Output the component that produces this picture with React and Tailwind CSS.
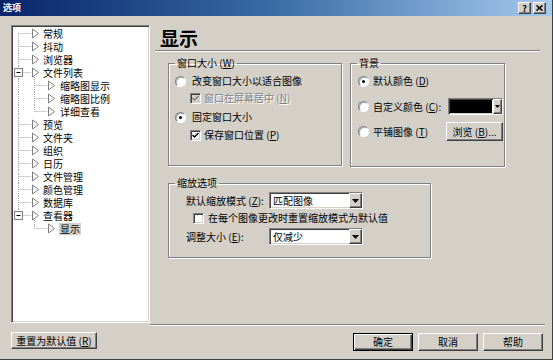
import React from 'react';

const sunken =
  'border border-t-[#808080] border-l-[#808080] border-r-white border-b-white shadow-[inset_1px_1px_0_#404040,inset_-1px_-1px_0_#d4d0c8]';
const raised =
  'border border-t-white border-l-white border-r-[#404040] border-b-[#404040] shadow-[inset_-1px_-1px_0_#808080]';

const tree = [
  { label: '常规', level: 1, first: true },
  { label: '抖动', level: 1 },
  { label: '浏览器', level: 1 },
  { label: '文件列表', level: 1, expander: true },
  { label: '缩略图显示', level: 2 },
  { label: '缩略图比例', level: 2 },
  { label: '详细查看', level: 2, lastChild: true },
  { label: '预览', level: 1 },
  { label: '文件夹', level: 1 },
  { label: '组织', level: 1 },
  { label: '日历', level: 1 },
  { label: '文件管理', level: 1 },
  { label: '颜色管理', level: 1 },
  { label: '数据库', level: 1 },
  { label: '查看器', level: 1, expander: true, last: true },
  { label: '显示', level: 2, lastChild: true, noTrunk: true, selected: true },
];

const dot = { stroke: '#a0a0a0', strokeDasharray: '1 1' };

function TreeRow({ item }) {
  const { label, level, first, last, expander, lastChild, noTrunk, selected } = item;
  const w = level === 1 ? 28 : 45;
  return (
    <div className="flex h-[13px] items-center overflow-hidden">
      <svg width={w} height="13" className="shrink-0">
        {level === 1 && <line x1="5.5" x2="5.5" y1={first ? 6.5 : 0} y2={last ? 6.5 : 13} {...dot} />}
        {level === 2 && !noTrunk && <line x1="5.5" x2="5.5" y1="0" y2="13" {...dot} />}
        {level === 1 && <line x1="5.5" x2="18" y1="6.5" y2="6.5" {...dot} />}
        {level === 2 && (
          <>
            <line x1="21.5" x2="21.5" y1="0" y2={lastChild ? 6.5 : 13} {...dot} />
            <line x1="21.5" x2="34" y1="6.5" y2="6.5" {...dot} />
          </>
        )}
        {expander && (
          <>
            <line x1="21.5" x2="21.5" y1="11" y2="13" {...dot} />
            <rect x="1.5" y="2.5" width="8" height="8" fill="#fff" stroke="#808080" />
            <line x1="3.5" x2="7.5" y1="6.5" y2="6.5" stroke="#000" />
          </>
        )}
        <polygon
          points={level === 1 ? '19.5,2 25.5,6.5 19.5,11' : '35.5,2 41.5,6.5 35.5,11'}
          fill="#fff"
          stroke="#808080"
        />
      </svg>
      <span
        className={
          selected
            ? 'ml-[1px] block h-[12px] bg-[#d4d0c8] px-[1px] leading-[12px]'
            : 'ml-[2px] block h-[12px] leading-[12px]'
        }
      >
        {label}
      </span>
    </div>
  );
}

function Radio({ checked }) {
  return (
    <span className="flex h-[11px] w-[11px] shrink-0 items-center justify-center rounded-full border border-t-[#808080] border-l-[#808080] border-r-white border-b-white bg-white shadow-[inset_1px_1px_0_#b0b0b0]">
      {checked && <span className="h-[3px] w-[3px] rounded-full bg-black" />}
    </span>
  );
}

function Check({ checked, disabled }) {
  return (
    <span
      className={`flex h-[11px] w-[11px] shrink-0 items-center justify-center ${sunken} ${
        disabled ? 'bg-[#d4d0c8]' : 'bg-white'
      }`}
    >
      {checked && (
        <svg width="7" height="7" viewBox="0 0 7 7">
          <path d="M0.5 3 L2.5 5 L6.5 1" fill="none" stroke={disabled ? '#808080' : '#000'} strokeWidth="1.5" />
        </svg>
      )}
    </span>
  );
}

function Arrow() {
  return (
    <svg width="7" height="4" viewBox="0 0 7 4">
      <polygon points="0,0 7,0 3.5,4" fill="#000" />
    </svg>
  );
}

function Combo({ value }) {
  return (
    <div className={`flex h-[17px] w-[94px] bg-white ${sunken}`}>
      <span className="flex flex-1 items-center pl-[3px]">{value}</span>
      <span className={`flex w-[13px] items-center justify-center bg-[#d4d0c8] ${raised}`}>
        <Arrow />
      </span>
    </div>
  );
}

function Acc({ children }) {
  return (
    <>
      {' '}(<u>{children}</u>)
    </>
  );
}

export default function App() {
  return (
    <div className="flex h-[360px] w-[553px] flex-col overflow-hidden border-r border-b border-r-[#404040] border-b-[#404040] bg-[#d4d0c8] font-['Noto_Sans_CJK_SC',sans-serif] text-[10px] leading-[12px] text-black">
      {/* title bar */}
      <div className="flex h-[16px] shrink-0 items-center bg-linear-to-r from-[#0a246a] via-[#3a6ea5] to-[#a6caf0] pl-[3px] pr-[6px]">
        <span className="text-[9px] font-bold text-white">选项</span>
        <div className="ml-auto flex gap-[2px]">
          <span className={`flex h-[12px] w-[13px] items-center justify-center bg-[#d4d0c8] text-[9px] font-bold leading-none ${raised}`}>
            ?
          </span>
          <span className={`flex h-[12px] w-[13px] items-center justify-center bg-[#d4d0c8] ${raised}`}>
            <svg width="7" height="6" viewBox="0 0 7 6">
              <path d="M0.5 0.5 L6.5 5.5 M6.5 0.5 L0.5 5.5" stroke="#000" strokeWidth="1.6" />
            </svg>
          </span>
        </div>
      </div>

      {/* body */}
      <div className="flex flex-1 flex-col pl-[11px] pr-[7px] pt-[9px]">
        <div className="flex h-[300px]">
          <div className={`h-[298px] w-[139px] shrink-0 bg-white pl-[1px] pt-[1px] ${sunken}`}>
            {tree.map((item) => (
              <TreeRow key={item.label} item={item} />
            ))}
          </div>

          <div className="flex flex-1 flex-col border-b border-b-[#808080] shadow-[0_1px_0_#fff]">
            <div className="mx-[5px] flex h-[26px] items-center border-b border-b-[#808080] pl-[5px] text-[19px] font-bold leading-none shadow-[0_1px_0_#fff]">
              显示
            </div>

            <div className="ml-[18px] mt-[6px] flex items-start gap-[8px]">
              <fieldset className="h-[109px] w-[174px] border border-[#808080] shadow-[inset_1px_1px_0_#fff,1px_1px_0_#fff]">
                <legend className="ml-[6px] px-[2px] leading-[12px]">
                  窗口大小<Acc>W</Acc>
                </legend>
                <div className="flex flex-col">
                  <div className="ml-[6px] mt-[5px] flex h-[14px] items-center gap-[6px]">
                    <Radio />
                    <span>改变窗口大小以适合图像</span>
                  </div>
                  <div className="ml-[21px] mt-[3px] flex h-[14px] items-center gap-[3px] text-[#808080] [text-shadow:1px_1px_0_#fff]">
                    <Check checked disabled />
                    <span>
                      窗口在屏幕居中<Acc>N</Acc>
                    </span>
                  </div>
                  <div className="ml-[6px] mt-[5px] flex h-[14px] items-center gap-[6px]">
                    <Radio checked />
                    <span>固定窗口大小</span>
                  </div>
                  <div className="ml-[21px] mt-[4px] flex h-[14px] items-center gap-[3px]">
                    <Check checked />
                    <span>
                      保存窗口位置<Acc>P</Acc>
                    </span>
                  </div>
                </div>
              </fieldset>

              <fieldset className="h-[110px] w-[155px] border border-[#808080] pr-[1px] shadow-[inset_1px_1px_0_#fff,1px_1px_0_#fff]">
                <legend className="ml-[6px] px-[2px] leading-[12px]">背景</legend>
                <div className="flex flex-col">
                  <div className="ml-[7px] mt-[5px] flex h-[14px] items-center gap-[4px]">
                    <Radio checked />
                    <span>
                      默认颜色<Acc>D</Acc>
                    </span>
                  </div>
                  <div className="ml-[7px] mt-[10px] flex h-[17px] items-center gap-[4px]">
                    <Radio />
                    <span>
                      自定义颜色<Acc>C</Acc>:
                    </span>
                    <div className={`ml-auto flex h-[17px] w-[55px] bg-white ${sunken}`}>
                      <span className="m-[1px] flex-1 bg-black" />
                      <span className={`flex w-[9px] items-center justify-center bg-[#d4d0c8] ${raised}`}>
                        <svg width="5" height="3" viewBox="0 0 5 3">
                          <polygon points="0,0 5,0 2.5,3" fill="#000" />
                        </svg>
                      </span>
                    </div>
                  </div>
                  <div className="ml-[7px] mt-[7px] flex h-[19px] items-center gap-[4px]">
                    <Radio />
                    <span>
                      平铺图像<Acc>T</Acc>
                    </span>
                    <span className={`ml-auto flex h-[19px] w-[57px] items-center justify-center bg-[#d4d0c8] ${raised}`}>
                      浏览<Acc>B</Acc>...
                    </span>
                  </div>
                </div>
              </fieldset>
            </div>

            <fieldset className="ml-[18px] mt-[10px] h-[81px] w-[263px] border border-[#808080] shadow-[inset_1px_1px_0_#fff,1px_1px_0_#fff]">
              <legend className="ml-[6px] px-[2px] leading-[12px]">缩放选项</legend>
              <div className="flex flex-col">
                <div className="mt-[3px] flex h-[17px] items-center pl-[17px]">
                  <span className="w-[83px]">
                    默认缩放模式<Acc>Z</Acc>:
                  </span>
                  <Combo value="匹配图像" />
                </div>
                <div className="ml-[24px] mt-[3px] flex h-[12px] items-center gap-[4px]">
                  <Check />
                  <span>在每个图像更改时重置缩放模式为默认值</span>
                </div>
                <div className="mt-[4px] flex h-[17px] items-center pl-[17px]">
                  <span className="w-[83px]">
                    调整大小<Acc>E</Acc>:
                  </span>
                  <Combo value="仅减少" />
                </div>
              </div>
            </fieldset>
          </div>
        </div>

        {/* bottom buttons */}
        <div className="mt-[7px] flex items-start">
          <span className={`flex h-[17px] w-[86px] items-center justify-center bg-[#d4d0c8] ${raised}`}>
            重置为默认值<Acc>R</Acc>
          </span>
          <div className="ml-auto flex gap-[5px] pr-[2px] pt-[1px]">
            <span className="flex h-[18px] w-[60px] items-center justify-center border border-black bg-[#d4d0c8] shadow-[inset_1px_1px_0_#fff,inset_-1px_-1px_0_#404040,inset_-2px_-2px_0_#808080]">
              确定
            </span>
            <span className={`flex h-[18px] w-[60px] items-center justify-center bg-[#d4d0c8] ${raised}`}>取消</span>
            <span className={`flex h-[18px] w-[60px] items-center justify-center bg-[#d4d0c8] ${raised}`}>帮助</span>
          </div>
        </div>
      </div>
    </div>
  );
}
